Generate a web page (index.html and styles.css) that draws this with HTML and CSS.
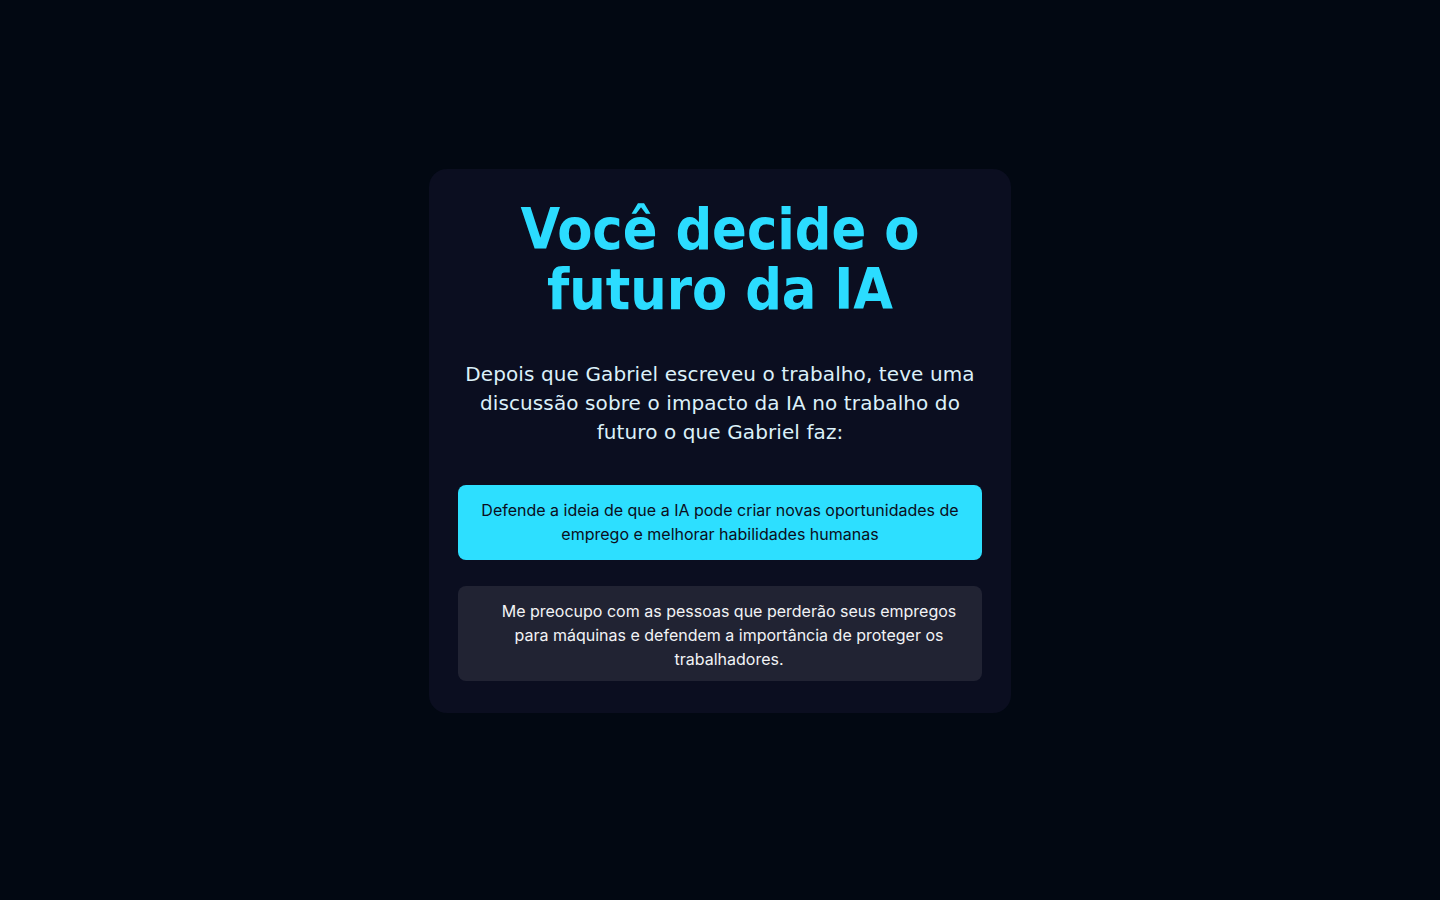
FILE: index.html
```html
<!DOCTYPE html>
<html lang="pt-BR">
<head>
<meta charset="utf-8">
<title>Você decide o futuro da IA</title>
<link rel="stylesheet" href="styles.css">
</head>
<body>
<main class="page">
  <section class="card">
    <h1 class="title">Você decide o<br>futuro da IA</h1>
    <p class="lead">Depois que Gabriel escreveu o trabalho, teve uma discussão sobre o impacto da IA no trabalho do futuro o que Gabriel faz:</p>
    <div class="choices">
      <button class="choice choice-primary">Defende a ideia de que a IA pode criar novas oportunidades de emprego e melhorar habilidades humanas</button>
      <button class="choice choice-secondary">Me preocupo com as pessoas que perderão seus empregos para máquinas e defendem a importância de proteger os trabalhadores.</button>
    </div>
  </section>
</main>
</body>
</html>
```
FILE: styles.css
```css
* { box-sizing: border-box; }
html, body { margin: 0; padding: 0; }
body {
  background: #020812;
  font-family: "DejaVu Sans", sans-serif;
  min-height: 900px;
}
.page {
  display: flex;
  justify-content: center;
  padding-top: 169px;
}
.card {
  width: 582px;
  background: #0b0e20;
  border-radius: 18px;
  padding: 30px 29px 32px;
  display: flex;
  flex-direction: column;
  align-items: center;
}
.title {
  margin: 0;
  color: #2bdcff;
  font-family: "DejaVu Sans Condensed", "DejaVu Sans", sans-serif;
  font-stretch: condensed;
  font-weight: 700;
  font-size: 57px;
  line-height: 60px;
  text-align: center;
}
.lead {
  margin: 41px 0 0;
  color: #dcf1fa;
  font-family: "DejaVu Sans", sans-serif;
  font-size: 20px;
  letter-spacing: 0.1px;
  line-height: 29px;
  text-align: center;
}
.choices {
  margin-top: 38px;
  width: 100%;
  display: flex;
  flex-direction: column;
  gap: 26px;
}
.choice {
  display: block;
  width: 100%;
  border: none;
  border-radius: 8px;
  font-family: Inter, "Noto Sans", sans-serif;
  font-size: 16px;
  line-height: 24px;
  text-align: center;
  cursor: pointer;
}
.choice-primary {
  background: #2ddfff;
  color: #0b0e20;
  padding: 13px 20px 14px;
}
.choice-secondary {
  background: #212333;
  color: #f2f3f6;
  padding: 13px 22px 10px 40px;
}
```
